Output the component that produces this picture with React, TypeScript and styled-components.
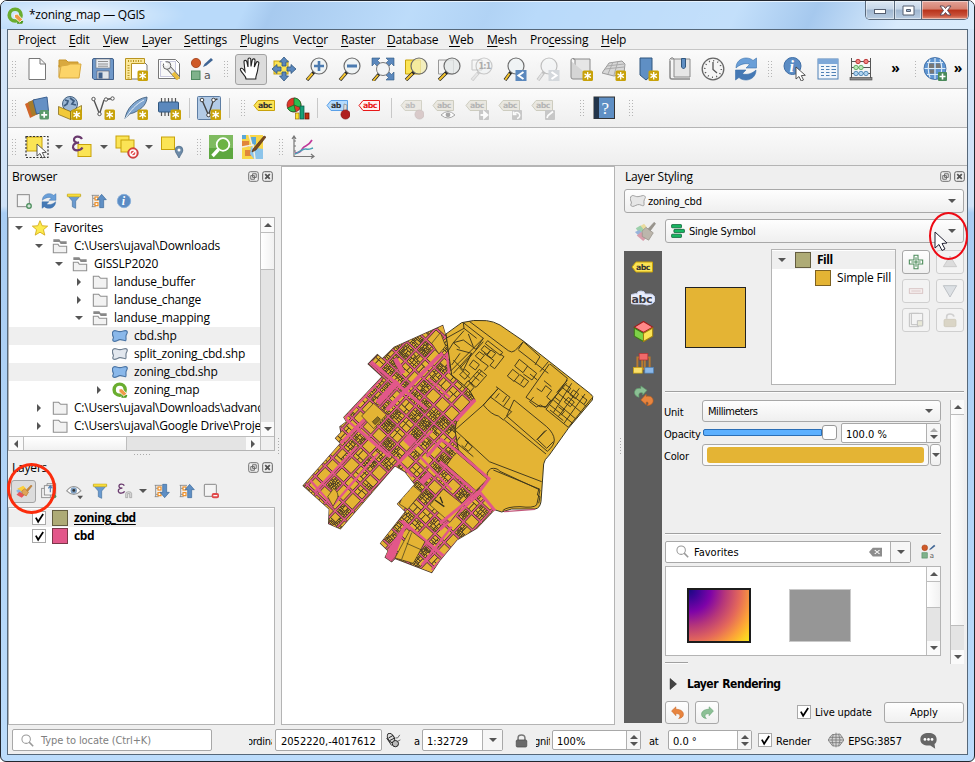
import React from 'react';
import styled, { createGlobalStyle, css } from 'styled-components';

const ui = `"Open Sans", "Noto Sans", sans-serif`;
const tahoma = `"DejaVu Sans Condensed", "DejaVu Sans", sans-serif`;

const Global = createGlobalStyle`
  * { box-sizing: border-box; }
  body { margin: 0; background: #fff; font-family: ${ui}; font-size: 12px; color: #000; overflow: hidden; }
  svg { display: block; flex: none; }
`;

/* ---------- window ---------- */
const Window = styled.div`
  position: relative; width: 975px; height: 762px; display: flex; flex-direction: column;
  border: 1px solid #22262e; border-radius: 7px 7px 6px 6px;
  background: linear-gradient(180deg, #d3e5f8 0, #cfe2f7 205px, #a9cdf3 212px, #b3d6f8 560px, #bcdcfb 100%);
  overflow: hidden;
`;
const TitleBar = styled.div`
  height: 28px; flex: none; display: flex; align-items: flex-start; padding-left: 6px;
  background:
    radial-gradient(ellipse 110px 22px at 75px 14px, rgba(255,255,255,.75), rgba(255,255,255,0)),
    linear-gradient(115deg, rgba(255,255,255,0) 25%, rgba(120,160,210,.28) 28%, rgba(255,255,255,.05) 42%, rgba(120,160,210,.12) 50%, rgba(255,255,255,0) 55%, rgba(255,255,255,.15) 75%, rgba(120,160,210,.3) 83%, rgba(255,255,255,.45) 92%),
    #b9dafa;
  box-shadow: inset 0 1px 0 #e6f2fe;
`;
const TitleIcon = styled.div`padding-top: 6px;`;
const TitleText = styled.div`
  padding: 5px 0 0 5px; font-size: 12px; letter-spacing: -0.25px; line-height: 18px; flex: 1;
`;
const WinButtons = styled.div`
  display: flex; height: 19px; width: 104px; margin-right: 5px; border: 1px solid #5a6a7d; border-top: 0;
  border-radius: 0 0 5px 5px; overflow: hidden;
`;
const WinButton = styled.div<{ $w: number; $close?: boolean }>`
  width: ${p => p.$w}px; display: flex; justify-content: center; align-items: center;
  border-right: ${p => (p.$close ? 0 : 1)}px solid #5a6a7d;
  box-shadow: inset 0 0 0 1px rgba(255,255,255,.45);
  background: ${p => p.$close
    ? 'linear-gradient(#e3a398 0, #d5806f 45%, #b8321a 50%, #c8513a 80%, #e0907a 100%)'
    : 'linear-gradient(#dde8f4 0, #c5d5e7 45%, #a0b6d0 50%, #b9cde2 100%)'};
`;
const Body = styled.div`
  margin: 0 6px 6px; width: 961px; height: 726px; border: 1px solid #56687a; background: #efefef;
  display: flex; flex-direction: column;
`;
const MenuBar = styled.div`
  height: 20px; flex: none; display: flex; padding-left: 10px; background: #f0f0f0; border-bottom: 1px solid #c6c6c6;
`;
const MenuItem = styled.div<{ $w: number; $ls?: number }>`
  width: ${p => p.$w + 14}px; line-height: 20px; white-space: nowrap; font-size: 12px;
  letter-spacing: ${p => p.$ls ?? -0.2}px;
  u { text-underline-offset: 2px; text-decoration-thickness: 1px; }
`;
const ToolBar = styled.div<{ $h: number }>`
  height: ${p => p.$h}px; flex: none; display: flex; align-items: center; background: linear-gradient(#fbfbfb, #eeeeee);
  border-bottom: 1px solid #b4b4b4;
`;
const Cell = styled.div<{ $w: number }>`
  width: ${p => p.$w}px; flex: none; display: flex; align-items: center; justify-content: center;
`;
const Grip = styled.div<{ $w: number }>`
  width: ${p => p.$w}px; height: 18px; flex: none; display: flex; justify-content: center;
  &::before { content: ''; width: 6px; height: 18px;
    background: radial-gradient(circle, #b5b5b5 0.8px, transparent 1px) 0 0 / 3px 3px; }
`;
const Sep = styled.div<{ $w: number }>`
  width: ${p => p.$w}px; flex: none; display: flex; justify-content: center;
  &::before { content: ''; width: 1px; height: 20px; background: #c8c8c8; }
`;
const Pressed = styled.div<{ $w: number; $h: number }>`
  width: ${p => p.$w}px; height: ${p => p.$h}px; border: 1px solid #a3a3a3; border-radius: 3px; background: #dcdcdc;
  display: flex; align-items: center; justify-content: center; flex: none;
`;
const More = styled.div<{ $w: number }>`
  width: ${p => p.$w}px; text-align: center; font: bold 14px/18px ${ui}; padding-bottom: 2px;
`;
const Caret = styled.div<{ $dir?: 'up' | 'down' | 'right' | 'left'; $s?: number; $c?: string }>`
  width: 0; height: 0; flex: none; ${p => {
    const s = p.$s ?? 4, c = p.$c ?? '#555';
    const side = `${s}px solid transparent`, tip = `${s}px solid ${c}`;
    switch (p.$dir) {
      case 'up': return css`border-left: ${side}; border-right: ${side}; border-bottom: ${tip};`;
      case 'right': return css`border-top: ${side}; border-bottom: ${side}; border-left: ${tip};`;
      case 'left': return css`border-top: ${side}; border-bottom: ${side}; border-right: ${tip};`;
      default: return css`border-left: ${side}; border-right: ${side}; border-top: ${tip};`;
    }
  }}
`;

/* ---------- docks ---------- */
const Main = styled.div`height: 559px; display: flex; flex: none;`;
const LeftDock = styled.div`width: 267px; display: flex; flex-direction: column;`;
const DockTitle = styled.div<{ $h: number; $pl: number; $pr: number }>`
  height: ${p => p.$h}px; flex: none; display: flex; align-items: center; padding: 0 ${p => p.$pr}px 1px ${p => p.$pl}px;
  letter-spacing: -0.2px; gap: 3px;
  span { flex: 1; }
`;
const DockTools = styled.div`height: 29px; flex: none; display: flex; align-items: center; padding: 0 0 3px 3px;`;
const TreeBox = styled.div<{ $h: number }>`
  height: ${p => p.$h}px; flex: none; background: #fff; border: 1px solid #b4b4b4; display: flex; flex-direction: column;
`;
const TreeTop = styled.div`display: flex; flex: 1; min-height: 0;`;
const TreeRows = styled.div`flex: 1; min-width: 0; overflow: hidden; padding-top: 1px;`;
const TreeRow = styled.div<{ $lvl: number; $alt?: boolean }>`
  height: 18px; display: flex; align-items: center; padding-left: ${p => p.$lvl * 20}px;
  background: ${p => (p.$alt ? '#efefef' : 'transparent')};
`;
const Label = styled.span<{ $ls?: number; $b?: boolean; $u?: boolean; $pl?: number }>`
  white-space: nowrap; line-height: 18px; letter-spacing: ${p => p.$ls ?? -0.2}px; padding-left: ${p => p.$pl ?? 3}px;
  font-weight: ${p => (p.$b ? 700 : 400)};
  text-decoration: ${p => (p.$u ? 'underline' : 'none')}; text-underline-offset: 2px;
`;
const VBar = styled.div`
  width: 14px; flex: none; display: flex; flex-direction: column; background: #e4e4e4;
  border-left: 1px solid #bdbdbd;
`;
const BarEnd = styled.div<{ $v?: boolean }>`
  ${p => (p.$v ? 'width: 14px;' : 'height: 14px;')} flex: none; background: #fafafa; display: flex; align-items: center; justify-content: center;
`;
const Thumb = styled.div<{ $n: number; $v?: boolean }>`
  ${p => p.$v
    ? `width: ${p.$n}px; background: linear-gradient(#fff, #f1f1f1); border-width: 0 1px;`
    : `height: ${p.$n}px; background: linear-gradient(90deg, #fff, #f1f1f1); border-width: 1px 0;`}
  flex: none; border-style: solid; border-color: #bdbdbd;
`;
const Fill = styled.div`flex: 1;`;
const HBar = styled.div`height: 14px; flex: none; display: flex; background: #e4e4e4; border-top: 1px solid #bdbdbd;`;
const HBarCorner = styled.div`width: 14px; background: #efefef; border-left: 1px solid #bdbdbd;`;
const Splitter = styled.div`
  height: 6px; flex: none; display: flex; justify-content: center; align-items: center;
  &::before { content: ''; width: 18px; height: 2px; background: radial-gradient(circle, #aaa .8px, transparent 1px) 0 0 / 3px 3px; }
`;
const VSplit = styled.div<{ $w: number }>`
  width: ${p => p.$w}px; flex: none; display: flex; flex-direction: column; align-items: center; justify-content: center;
  &::before { content: ''; width: 2px; height: 18px; background: radial-gradient(circle, #aaa .8px, transparent 1px) 0 0 / 3px 3px; }
`;
const Check = styled.div`
  width: 14px; height: 14px; border: 1px solid #a9a9a9; background: #fff; flex: none;
  display: flex; align-items: center; justify-content: center;
`;
const Swatch = styled.div<{ $c: string; $s?: number }>`
  width: ${p => p.$s ?? 16}px; height: ${p => p.$s ?? 16}px; background: ${p => p.$c}; border: 1px solid rgba(40,30,20,.55); flex: none;
`;
const Canvas = styled.div`width: 334px; flex: none; border: 1px solid #b4b4b4; background: #fff;`;

/* ---------- styling panel ---------- */
const RightDock = styled.div`width: 343px; display: flex; flex-direction: column; font-family: ${tahoma}; font-size: 11px;`;
const TitleWrap = styled.div`font-family: ${ui}; font-size: 12px; height: 23px;`;
const Combo = styled.div<{ $w: number; $h: number }>`
  width: ${p => p.$w}px; height: ${p => p.$h}px; flex: none; border: 1px solid #a8a8a8; border-radius: 3px;
  background: linear-gradient(#fefefe, #efefef); display: flex; align-items: center; padding: 0 7px 0 5px;
  > span { flex: 1; padding-top: 2px; }
`;
const RendererRow = styled.div`display: flex; align-items: center; padding-top: 6px; height: 30px;`;
const StyleBody = styled.div`display: flex; gap: 3px; padding-top: 6px; height: 481px;`;
const SideTabs = styled.div`
  width: 38px; margin: 2px 0 1px; background: #5d5d5d; display: flex; flex-direction: column; align-items: center; flex: none;
`;
const SideTab = styled.div`height: 32px; width: 31px; display: flex; align-items: center; justify-content: center;`;
const StyleContent = styled.div`width: 299px; display: flex; flex-direction: column;`;
const SymbolRow = styled.div`display: flex; height: 136px; flex: none;`;
const Preview = styled.div`width: 106px; padding: 38px 0 0 20px;`;
const PreviewFill = styled.div`width: 61px; height: 61px; background: #e4b434; border: 1px solid #222;`;
const SymbolTree = styled.div`width: 125px; border: 1px solid #b4b4b4; background: #fff; font-family: ${ui}; font-size: 12px; padding-top: 1px;`;
const SymbolButtons = styled.div`
  display: grid; grid-template-columns: 28px 28px; grid-auto-rows: 24px; gap: 5px 6px; margin: 1px 0 0 6px;
`;
const PushButton = styled.div<{ $w: number; $h: number; $dim?: boolean; $text?: boolean }>`
  width: ${p => p.$w}px; height: ${p => p.$h}px; border: 1px solid ${p => (p.$dim ? '#cfcfcf' : '#a8a8a8')}; border-radius: 3px;
  background: ${p => (p.$dim ? '#f3f3f3' : 'linear-gradient(#fefefe, #f0f0f0)')};
  display: flex; align-items: center; justify-content: center; flex: none; padding-top: ${p => (p.$text ? 2 : 0)}px;
`;
const Rule = styled.div<{ $mt: number; $w: number }>`
  margin-top: ${p => p.$mt}px; width: ${p => p.$w}px; height: 2px; border-top: 1px solid #a0a0a0; background: #fcfcfc; flex: none;
`;
const ScrollArea = styled.div`display: flex; height: 271px; gap: 9px; padding-top: 7px; flex: none;`;
const Form = styled.div`width: 276px; display: flex; flex-direction: column;`;
const FormRow = styled.div<{ $h: number }>`
  height: ${p => p.$h}px; display: flex; align-items: center; flex: none;
  > label { width: 37px; flex: none; letter-spacing: -0.2px; white-space: nowrap; padding-top: 2px; margin-left: -1px; margin-right: 1px; }
`;
const Slider = styled.div`
  width: 135px; height: 14px; display: flex; align-items: center; flex: none; margin-right: 4px; margin-top: -2px;
  &::before { content: ''; height: 5px; width: 121px; margin-left: 1px; border: 1px solid #2b6eb5; border-radius: 2px 0 0 2px; background: #5cb0ff; }
  &::after { content: ''; width: 13px; height: 13px; border: 1px solid #999; border-radius: 3px; background: #fff; }
`;
const Spin = styled.div<{ $w: number; $h: number }>`
  width: ${p => p.$w}px; height: ${p => p.$h}px; border: 1px solid #a8a8a8; border-radius: 2px; background: #fff; flex: none;
  display: flex; align-items: center; padding-left: 4px; white-space: nowrap; overflow: hidden;
  > span { flex: 1; padding-top: 2px; }
`;
const SpinArrows = styled.div<{ $w?: number }>`
  width: ${p => p.$w ?? 14}px; height: 100%; border-left: 1px solid #b0b0b0; background: #f6f6f6; flex: none;
  display: flex; flex-direction: column; align-items: center; justify-content: center; gap: 3px;
`;
const ColorButton = styled.div`
  width: 227px; height: 22px; border: 1px solid #a8a8a8; border-radius: 3px; background: #fafafa; padding: 2px 4px; flex: none;
  &::before { content: ''; display: block; height: 16px; border-radius: 3px; background: #e4b434; }
`;
const SearchRow = styled.div`display: flex; align-items: center; padding-top: 5px; height: 29px;`;
const StyleList = styled.div`
  margin-top: 3px; height: 90px; border: 1px solid #b4b4b4; background: #fff; display: flex; flex: none;
`;
const StyleItems = styled.div`flex: 1; display: flex; padding: 21px 0 0 21px; gap: 38px;`;
const Gradient = styled.div`
  width: 64px; height: 55px; border: 2px solid #1c1c1c;
  background: radial-gradient(circle at 0 0, #1a0a80 0, #3c0496 8px, #7e03a8 22px, #b5367a 36px, #e4685a 51px, #fb9f3a 63px, #fdca26 72px, #f0f221 82px);
`;
const Gray = styled.div`width: 62px; height: 53px; margin-top: 1px; border: 1px solid #c9c9c9; background: #969696;`;
const RenderingHead = styled.div`
  display: flex; align-items: center; height: 19px; margin-top: 10px; padding: 1px 0 0 4px; gap: 8px; flex: none;
  font: bold 12px ${tahoma}; letter-spacing: -0.5px; word-spacing: 1px;
  svg { margin-right: 1px; }
`;
const ActionRow = styled.div`display: flex; align-items: center; height: 24px; margin-top: 7px; flex: none; line-height: 18px;`;

/* ---------- status bar ---------- */
const Status = styled.div`
  height: 29px; flex: none; display: flex; align-items: center; font-family: ${tahoma}; font-size: 11px; padding: 1px 0 0 4px;
`;
const Field = styled.div<{ $w: number; $ml: number; $pl: number; $c?: string }>`
  width: ${p => p.$w}px; margin-left: ${p => p.$ml}px; height: 22px; flex: none; border: 1px solid #a8a8a8; border-radius: 2px; background: #fff;
  display: flex; align-items: center; padding-left: ${p => p.$pl}px; color: ${p => p.$c ?? '#000'}; white-space: nowrap;
  > span { flex: 1; padding-top: 2px; }
`;
const Clip = styled.div<{ $w: number; $ml: number; $shift?: number }>`
  width: ${p => p.$w}px; margin-left: ${p => p.$ml}px; overflow: hidden; white-space: nowrap; flex: none; padding-top: 2px;
  span { margin-left: ${p => -(p.$shift ?? 0)}px; letter-spacing: -0.3px; }
`;
const Push = styled.div<{ $ml: number }>`margin-left: ${p => p.$ml}px; flex: none; white-space: nowrap;`;
const StatusText = styled.div<{ $ls: number }>`padding: 2px 0 0 4px; letter-spacing: ${p => p.$ls}px; white-space: nowrap;`;

/* ---------- annotations over the window ---------- */
const Ring = styled.div<{ $x: number; $y: number; $w: number; $h: number; $b: number; $c: string }>`
  position: absolute; left: ${p => p.$x}px; top: ${p => p.$y}px; width: ${p => p.$w}px; height: ${p => p.$h}px;
  border: ${p => p.$b}px solid ${p => p.$c}; border-radius: 50%;
`;
const Pointer = styled.div`position: absolute; left: 933px; top: 230px;`;

/* ---------- icons ---------- */
const GoldBadge = () => (
  <g>
    <rect x="13.500" y="13.500" width="10.500" height="10.500" rx="1.5" fill="#c8a20a" />
    <path d="M18.700 15v7.400M15.500 16.900l6.400 3.700M21.900 16.900l-6.400 3.700" stroke="#fff" strokeWidth="1.3" />
  </g>
);
const Tag = ({ fill, stroke, ink, text = 'abc' }: { fill: string; stroke: string; ink: string; text?: string }) => (
  <g>
    <path d="M1 9.500l4-5h16.500v10H5z" fill={fill} stroke={stroke} strokeWidth="1" />
    <text x="5" y="12.300" fontFamily="DejaVu Sans" fontWeight="700" fontSize="7.8" letterSpacing="-.5" fill={ink}>{text}</text>
  </g>
);
const Lens = ({ cx = 14, cy = 9, fill = '#eef2f4', dim }: { cx?: number; cy?: number; fill?: string; dim?: boolean }) => (
  <g opacity={dim ? 0.4 : 1}>
    <path d={`M${cx - 5} ${cy + 6}L2 23`} stroke={dim ? '#777' : '#222'} strokeWidth="3.4" />
    <path d={`M${cx - 6.5} ${cy + 7.5}L2.3 22.7`} stroke={dim ? '#ccc' : '#f4c430'} strokeWidth="2" />
    <circle cx={cx} cy={cy} r="8" fill={fill} fillOpacity=".8" stroke="#6d6d6d" strokeWidth="1.2" />
  </g>
);
const Qlogo = () => (
  <g>
    <circle cx="11.500" cy="11.500" r="8.300" fill="none" stroke="#6aad2f" strokeWidth="5.200" />
    <path d="M16 17l7 3-1.500 3.500H14z" fill="#4e9a1e" />
    <path d="M10.500 10.500l4.500-.5 7 7.500-4 4-7.500-7z" fill="#f09a48" stroke="#fff" strokeWidth="1.200" />
  </g>
);
const Refresh = () => (
  <g>
    <path d="M2 11C2 4.500 7 1 12 1c3 0 5.500 1 7 2.500L22.500 1v10H12l3.500-3.500C14 6 7 6 2 11z" fill="#6a9fd8" stroke="#3a70ab" strokeWidth=".6" />
    <path d="M22 13c0 6.500-5 10-10 10-3 0-5.500-1-7-2.500L1.500 23V13H12l-3.500 3.500C10 18 17 18 22 13z" fill="#4579b5" stroke="#3a70ab" strokeWidth=".6" />
  </g>
);
const Cursor = ({ x = 0, y = 0 }: { x?: number; y?: number }) => (
  <path transform={`translate(${x} ${y})`} d="M0 0v12l3-2.500 2.200 4.500 2.300-1.100-2.200-4.300 4-.3z" fill="#fff" stroke="#444" strokeWidth=".9" />
);
const PaletteDim = () => (
  <g opacity=".85">
    <path d="M6 7l5-3 3 4-6 4z" fill="#e8d890" />
    <path d="M2 9l5-3 4 5-5 4z" fill="#8fcaa0" />
    <path d="M1 13l5-2 5 5-4 3z" fill="#88a8d8" />
    <path d="M3 17l5-4 7 5-5 5z" fill="#d490a0" />
    <path d="M9 12l4-4 8 6-5 8-7-4z" fill="#b3aca0" stroke="#857f76" strokeWidth=".8" />
    <path d="M15.500 9.500l6.500-7 1.500 1.500-5.500 7.500z" fill="#8a857c" stroke="#77726a" strokeWidth=".6" />
  </g>
);
const Brush = () => (
  <g>
    <path d="M3 9l8-4 4 4-8 5z" fill="#fbcf3c" />
    <path d="M1.500 11.500l3.500-2 5 4.500-4 3z" fill="#8db4e2" />
    <path d="M2 17l4-4 7 4-4 4z" fill="#e8545a" />
    <path d="M9 12l4-3 5 4.500-3 5-5-2.500z" fill="#e0a458" stroke="#b8762c" strokeWidth=".8" />
    <path d="M15 10.500l6.500-6.500 1.300 1.300-5.800 7.200z" fill="#c8883c" stroke="#a86a24" strokeWidth=".6" />
  </g>
);
const StyleMgr = () => (
  <g>
    <circle cx="6" cy="6" r="4.600" fill="#cf5a28" stroke="#a03c14" strokeWidth=".8" />
    <rect x="1.500" y="14" width="8.500" height="8.500" fill="#7fb28b" stroke="#4f8a60" strokeWidth="1" />
    <path d="M13 10l1.500-3L21 1l2 2-6.500 5.500z" fill="#3f6594" />
    <text x="14" y="22" fontFamily="DejaVu Sans" fontSize="11" fill="#555">a</text>
  </g>
);
const Up = () => <path d="M16 2l7 8h-4v12h-6V10H9z" fill="#5f8fc4" stroke="#2f5f94" strokeWidth=".9" />;
const Down = () => <path d="M16 22l7-8h-4V2h-6v12H9z" fill="#5f8fc4" stroke="#2f5f94" strokeWidth=".9" />;
const TreeBits = () => (
  <g>
    <path d="M2.500 3v18M3 8h4M3 17h4M1 3.500h11M1 20.500h6" stroke="#888" strokeWidth="1.300" fill="none" />
    <rect x="6" y="6" width="4.500" height="4.500" fill="#fff" stroke="#ef8b1c" strokeWidth="1.700" />
    <rect x="6" y="14.500" width="4.500" height="4.500" fill="#fff" stroke="#ef8b1c" strokeWidth="1.700" />
  </g>
);
const UndoShape = ({ c = '#e8853f', s = '#c45f1c' }: { c?: string; s?: string }) => (
  <path d="M1 9l8-7.500V6c9 0 14 4 14 9.500 0 4.500-4 7-9 7.500 4-2.500 4-9-5-9v4z" fill={c} stroke={s} strokeWidth=".9" />
);
const polyPath = 'M1 6c3-5 6 0 11-.5s8-3 10-1 1 2.500-.5 5.500.5 8-1 9-5.500-2.500-9-1.500-7 4-9.500 2 1-4 0-6-2-4-1-7.500z';

const icons: Record<string, React.ReactNode> = {
  q: <Qlogo />,
  new: <path d="M4 1.500h11l5.500 5.500v15.500H4zM15 1.500V7h5.500" fill="#fff" stroke="#777" />,
  open: <g><path d="M1 3h7l2 2h10v5H1zM1 8v12" fill="#d9a93e" stroke="#c8962a" /><path d="M1 21L3 9l7-1 2-1h11l-2 14z" fill="#fcd468" stroke="#d9a93e" /></g>,
  save: <g><path d="M1.500 3a1.500 1.500 0 0 1 1.500-1.500h18a1.500 1.500 0 0 1 1.500 1.500v19.500H3L1.500 21z" fill="#6f98c9" stroke="#41618c" /><rect x="5" y="2" width="14" height="9" fill="#e9edf2" stroke="#777" strokeWidth=".6" /><path d="M7 4.500h10M7 7h10M7 9.200h10" stroke="#777" strokeWidth=".8" /><rect x="6" y="14" width="12" height="8" fill="#dfe4ea" stroke="#556" strokeWidth=".6" /><rect x="7.500" y="15.500" width="4" height="6" fill="#41618c" /></g>,
  layout: <g><path d="M5 4h14l4 4v14H5z" fill="#fff" stroke="#777" /><path d="M1.500 1.500h19v5h-13v16h-6z" fill="#fbe89a" stroke="#b89420" /><path d="M4 4h14M4.500 8v14" stroke="#b89420" strokeDasharray="1 1.500" strokeWidth="2" /><rect x="8" y="8" width="11" height="12" fill="#fff" /><GoldBadge /></g>,
  layouts: <g><path d="M1.500 2.500h17l4 4v15h-21z" fill="#fff" stroke="#777" /><rect x="3.500" y="4.500" width="15" height="15" fill="#f8f8f8" stroke="#aac" strokeWidth=".6" /><path d="M10 9l11 12" stroke="#555" strokeWidth="5" /><path d="M10 9l11 12" stroke="#e8e8e8" strokeWidth="3.400" /><path d="M16 16l5.500 6" stroke="#e9bd3a" strokeWidth="4" /><circle cx="10" cy="8.500" r="3.800" fill="#eee" stroke="#666" /><path d="M6 4l4 4.500" stroke="#fff" strokeWidth="2.600" /></g>,
  style: <StyleMgr />,
  hand: <path d="M7 22c0-3-4.500-6-5.500-9-.5-2 1.500-2.500 3-.5l1.500 2L5 5c-.2-2 2.300-2.300 2.800-.3L9 10 9 2.500c0-2 2.700-2 2.800 0L12 9.500l1.300-6.500c.5-1.800 2.900-1.300 2.700.5L15.300 10l2-4.500c.8-1.600 2.900-.8 2.500.9-1 4-.8 6.600-1.800 9.600-.6 2-1.200 3-1.200 6z" fill="#fff" stroke="#222" strokeWidth="1.100" />,
  pan: <g><rect x="2" y="4" width="14" height="13" fill="#fbe455" stroke="#c8a20a" /><path d="M12 0l4.500 5H14v4h-4V5H7.500zM12 24l4.500-5H14v-4h-4v4H7.500zM0 12l5-4.500V10h4v4H5v2.500zM24 12l-5-4.500V10h-4v4h4v2.500z" fill="#5b88bd" stroke="#31577f" strokeWidth=".8" /></g>,
  zin: <g><Lens /><path d="M14 4v10M9 9h10" stroke="#4a7ab0" strokeWidth="2.600" /></g>,
  zout: <g><Lens /><path d="M9 9h10" stroke="#4a7ab0" strokeWidth="2.800" /></g>,
  zfull: <g><path d="M1 1h8L6.500 3.500 10 7 7 10 3.500 6.500 1 9zM23 1v8l-2.500-2.500L17 10l-3-3 3.500-3.500L15 1zM23 23h-8l2.500-2.500L13 16l3-3 4.500 4.500L23 15z" fill="#5b88bd" stroke="#31577f" strokeWidth=".6" /><g transform="translate(1 2)"><path d="M7 15L1 22" stroke="#222" strokeWidth="3.200" /><path d="M6 16L1.300 21.700" stroke="#f4c430" strokeWidth="1.800" /><circle cx="11" cy="10" r="6.500" fill="#f2f4f5" stroke="#777" /></g></g>,
  zsel: <g><path d="M1.500 3h15v14h-15z" fill="#fbe455" stroke="#c8a20a" /><Lens cx={15} fill="#f3ecb0" /></g>,
  zlay: <g><path d="M1.500 3h15v14h-15z" fill="#f3f3f3" stroke="#999" /><Lens cx={15} fill="#e4e7e7" /></g>,
  z11: <g opacity=".8"><path d="M2 3h10v10H2z" fill="none" stroke="#bbb" /><Lens dim /><text x="8.500" y="12" fontSize="8" fontWeight="700" fontFamily="DejaVu Sans" letterSpacing="-.8" fill="#999">1:1</text></g>,
  zprev: <g><Lens cx={13} /><rect x="12.500" y="13" width="11" height="11" fill="#5b88bd" /><path d="M20.500 15l-5 3.500 5 3.500" stroke="#fff" strokeWidth="2" fill="none" /></g>,
  znext: <g><Lens cx={13} dim /><rect x="12.500" y="13" width="11" height="11" fill="#d4d8dc" /><path d="M15.500 15l5 3.500-5 3.500" stroke="#fff" strokeWidth="2" fill="none" /></g>,
  bmark: <g><path d="M2 4a2 2 0 0 1 4-1v17h15V2H4" fill="#e6e6e6" stroke="#8a8a8a" /><path d="M2 4v16a2 2 0 0 0 2 2h17v-2" fill="#d5d5d5" stroke="#8a8a8a" /><GoldBadge /></g>,
  mesh3d: <g><path d="M0 16L7 6l13-2 3 3-1 9-10 3z" fill="#d7d7d7" stroke="#999" /><path d="M3 12l19-2M5 9l17-2M11 5L6 17M16 4l-4 14" stroke="#aaa" fill="none" /><GoldBadge /></g>,
  bnew: <g><path d="M5 1h12v17l-6 5-6-5z" fill="#5f8fc4" stroke="#31577f" /><GoldBadge /></g>,
  bshow: <g><path d="M2 4a2 2 0 0 1 4-2v18h16V2H3" fill="#e6e6e6" stroke="#8a8a8a" /><path d="M2 4v16a2 2 0 0 0 2 2h18" fill="none" stroke="#8a8a8a" strokeWidth="1.500" /><path d="M13.500 1.500h4V10l-2 2-2-2z" fill="#5f8fc4" stroke="#31577f" /></g>,
  clock: <g><circle cx="12" cy="12" r="10.800" fill="#f5f5f5" stroke="#666" strokeWidth="1.300" /><circle cx="12" cy="12" r="8.300" fill="none" stroke="#555" strokeWidth="1.600" strokeDasharray="1 3.340" /><path d="M12 5v7.500l4 3.500" fill="none" stroke="#555" strokeWidth="1.300" /></g>,
  refresh: <Refresh />,
  info: <g><circle cx="9.500" cy="9" r="8.500" fill="#5b8cc4" stroke="#3f6ea6" /><text x="6.500" y="14.500" fontFamily="Liberation Serif" fontStyle="italic" fontWeight="700" fontSize="16" fill="#fff">i</text><Cursor x={13} y={10} /></g>,
  table: <g><rect x="2" y="2" width="20" height="20" fill="#f2f6fb" stroke="#4f80b5" /><rect x="2" y="2" width="20" height="5" fill="#7ea8d8" /><path d="M5 9.500h3M5 12.500h3M5 15.500h3M5 18.500h3M10 9.500h3.500M10 12.500h3.500M10 15.500h3.500M10 18.500h3.500M15.500 9.500H20M15.500 12.500H20M15.500 15.500H20M15.500 18.500H20" stroke="#4f80b5" /></g>,
  abacus: <g><path d="M2.500 1v20M21.500 1v20M2 4.500h20M2 10.500h20M2 16.500h20" stroke="#555" /><rect x="1" y="20.500" width="22" height="2.500" fill="#888" stroke="#444" strokeWidth=".6" /><g strokeWidth=".8"><circle cx="9" cy="4.500" r="2.200" fill="#f08080" stroke="#b02020" /><circle cx="17" cy="4.500" r="2.200" fill="#f08080" stroke="#b02020" /><circle cx="7" cy="10.500" r="2.200" fill="#b8e8b8" stroke="#50a050" /><circle cx="12" cy="10.500" r="2.200" fill="#b8e8b8" stroke="#50a050" /><circle cx="7" cy="16.500" r="2.200" fill="#b0d4f0" stroke="#3f7cae" /><circle cx="12" cy="16.500" r="2.200" fill="#b0d4f0" stroke="#3f7cae" /><circle cx="17" cy="16.500" r="2.200" fill="#b0d4f0" stroke="#3f7cae" /></g></g>,
  globe: <g><circle cx="12" cy="11.500" r="11" fill="#5e95d2" stroke="#35639a" strokeWidth=".8" /><path d="M4 5.500h16M1.500 11.500h21M4 17.500h16M12 1v21M7 2.500Q3.500 11.500 7 20.500M17 2.500Q20.500 11.500 17 20.500" stroke="#dcebf8" fill="none" strokeWidth="1.200" /><path d="M6 6.500h5V11H6zM13 6.500h4l1 4.500h-5zM7 12.500h4v4H7z" fill="#777" /><rect x="15" y="15" width="9" height="9" rx="1" fill="#4a8a5a" /><path d="M19.500 16.500v6M16.500 19.500h6" stroke="#fff" strokeWidth="1.600" /></g>,
  dsm: <g><path d="M0 8l10-5 5 14-10 5z" fill="#d0662a" /><path d="M3 6l9-3 4 14-9 3z" fill="#a67c2a" /><path d="M8 4l14-3 1.500 14-12 3z" fill="#6590c4" stroke="#3c6191" /><rect x="14.500" y="14" width="9.500" height="9.500" rx="1.500" fill="#5a9a6a" /><path d="M19.200 15.800v6M16.200 18.800h6" stroke="#fff" strokeWidth="1.700" /></g>,
  gpkg: <g><circle cx="12" cy="8" r="7.500" fill="#9db8d6" stroke="#44617f" /><path d="M7 4l3 1-1 3-3 2M12 2l4 3-2 3 4 1" fill="none" stroke="#3d5c80" strokeWidth="1.800" /><path d="M0.500 10.500l12 5v8l-12-5z" fill="#f2c93a" stroke="#7a6010" strokeWidth=".7" /><path d="M12.500 15.500l11-6v9l-11 5z" fill="#fbe455" stroke="#7a6010" strokeWidth=".7" /><GoldBadge /></g>,
  shp: <g><path d="M2.500 3l6 15L13 4M15 3.500l6-1" stroke="#555" strokeWidth="1.400" fill="none" /><circle cx="2.500" cy="3" r="1.700" fill="#fff" stroke="#555" /><circle cx="8.500" cy="18" r="1.700" fill="#fff" stroke="#555" /><circle cx="15" cy="3.500" r="1.700" fill="#fff" stroke="#555" /><circle cx="21.500" cy="2.500" r="1.700" fill="#fff" stroke="#555" /><GoldBadge /></g>,
  feather: <g><path d="M1 23C2 14 10 3 23 1c0 6-4 12-14 16-3 .5-4 1-8 6z" fill="#7fa5cf" stroke="#44617f" strokeWidth=".9" /><path d="M1 23C6 15 12 8 20 4" stroke="#e4eef8" fill="none" /><GoldBadge /></g>,
  chip: <g><path d="M4.500 2v18M8 2v18M11.500 2v18M15 2v18M18.500 2v18" stroke="#555" strokeWidth="1.200" /><rect x="1.500" y="6" width="20" height="10" rx="1" fill="#5b88bd" stroke="#31577f" /><GoldBadge /></g>,
  virt: <g><rect x=".5" y=".5" width="23" height="23" rx="1" fill="#b3cbe6" stroke="#5d7da3" /><path d="M5 4l6.500 15L16.500 4l4-1" stroke="#444" strokeWidth="1.400" fill="none" /><circle cx="5" cy="4" r="1.800" fill="#fff" stroke="#444" /><circle cx="11.500" cy="19" r="1.800" fill="#fff" stroke="#444" /><circle cx="16.500" cy="4" r="1.800" fill="#fff" stroke="#444" /><GoldBadge /></g>,
  tagY: <Tag fill="#fbe455" stroke="#c8a20a" ink="#333" />,
  tagTab: <g transform="translate(0 2.500)"><Tag fill="#fbe455" stroke="#c8a20a" ink="#333" /></g>,
  chart: <g><circle cx="8" cy="9" r="7" fill="#e03828" stroke="#801010" strokeWidth=".7" /><path d="M8 9V2a7 7 0 0 1 6.500 9.500zM8 9l-6.500 3a7 7 0 0 0 8 3.500z" fill="#2ebc50" stroke="#106020" strokeWidth=".7" /><rect x="9.500" y="17" width="3.500" height="6" fill="#fbe030" stroke="#a07000" strokeWidth=".7" /><rect x="14" y="10" width="4" height="13" fill="#18a078" stroke="#085040" strokeWidth=".7" /><rect x="19" y="17" width="4" height="6" fill="#c03010" stroke="#601000" strokeWidth=".7" /></g>,
  tagPin: <g><Tag fill="#b5dafc" stroke="#5aa0e8" ink="#333" text="ab" /><path d="M18 8l3 1-.5 7h-3z" fill="#ddd" stroke="#777" strokeWidth=".6" /><circle cx="19.500" cy="18.500" r="4.600" fill="#b02020" stroke="#7a1010" strokeWidth=".6" /></g>,
  tagRed: <Tag fill="#fff2f2" stroke="#e81818" ink="#e81818" />,
  tg1: <g opacity=".6"><Tag fill="#e4e2d8" stroke="#bdbba8" ink="#999" text="ab" /><circle cx="19.500" cy="18.500" r="4.600" fill="#c8b0b0" stroke="#a99" strokeWidth=".6" /></g>,
  tg2: <g opacity=".7"><Tag fill="#e4e2d8" stroke="#bdbba8" ink="#999" /><path d="M9 19q7-7 14 0q-7 6-14 0z" fill="#fff" stroke="#888" /><circle cx="16" cy="18.800" r="2.400" fill="#888" /></g>,
  tg3: <g opacity=".7"><Tag fill="#e4e2d8" stroke="#bdbba8" ink="#999" /><rect x="14" y="14" width="10" height="10" rx="1" fill="#b5b5b5" /><path d="M15.500 19H20M19 16l3.500 3-3.500 3z" stroke="#fff" strokeWidth="1.800" fill="#fff" /></g>,
  tg4: <g opacity=".7"><Tag fill="#e4e2d8" stroke="#bdbba8" ink="#999" /><rect x="14" y="14" width="10" height="10" rx="1" fill="#b5b5b5" /><path d="M16.500 17.500a3 3 0 1 1 2.500 5M15.500 15.500v3h3" stroke="#fff" strokeWidth="1.500" fill="none" /></g>,
  tg5: <g opacity=".7"><Tag fill="#e4e2d8" stroke="#bdbba8" ink="#999" /><rect x="14" y="14" width="10" height="10" rx="1" fill="#b5b5b5" /><path d="M16 22l1-2.500 5-4" stroke="#fff" strokeWidth="1.800" fill="none" /></g>,
  help: <g><rect x="2" y="1" width="20.500" height="21.500" fill="#5f8fc4" stroke="#333" /><rect x="2" y="1" width="5" height="21.500" fill="#22344a" /><text x="9.500" y="18" fontFamily="Liberation Serif" fontSize="17" fill="#fff">?</text></g>,
  sel: <g><rect x="2" y="2" width="15" height="14" fill="#fbe455" stroke="#c8a20a" /><rect x="1" y="1.500" width="22" height="21" fill="none" stroke="#333" strokeWidth="1.200" strokeDasharray="2 1.500" /><Cursor x={12} y={9} /></g>,
  eps: <g><rect x="8" y="9.500" width="13" height="12" fill="#fbe455" stroke="#c8a20a" /><path d="M12 4C10 .5 3.500 1 4 5c.3 2.500 3 3 5 2.600C5 7.600 2.500 10 3 12.500c.8 4 7.500 3.500 9.500 0" fill="none" stroke="#6a3a6e" strokeWidth="2.200" /></g>,
  desel: <g><rect x="1" y="1" width="13" height="12" fill="#fbe455" stroke="#c8a20a" /><rect x="6" y="5" width="13" height="12" fill="#fbe455" stroke="#c8a20a" /><circle cx="18" cy="18" r="5.300" fill="#e0484a" stroke="#b02020" strokeWidth=".6" /><circle cx="18" cy="18" r="3" fill="none" stroke="#fff" strokeWidth="1.300" /><path d="M16 20l4-4" stroke="#fff" strokeWidth="1.300" /></g>,
  selLoc: <g><rect x="1.500" y="2" width="13" height="12.500" fill="#fbe455" stroke="#c8a20a" /><path d="M19 23c-2-4-3.800-5.500-3.800-8a3.800 3.800 0 0 1 7.600 0c0 2.500-1.800 4-3.800 8z" fill="#6d8ba8" stroke="#4a6885" strokeWidth=".8" /><circle cx="19" cy="15" r="1.500" fill="#fff" /></g>,
  qms: <g><rect x="0" y="0" width="24" height="24" fill="#7fbb60" /><rect x="0" y="13" width="24" height="11" fill="#4f9e33" opacity=".7" /><circle cx="14" cy="9.500" r="6.300" fill="#6cb344" stroke="#fff" strokeWidth="1.800" /><path d="M9.500 14.500L3.500 21" stroke="#fff" strokeWidth="3.400" /></g>,
  osm: <g><rect x="0" y="0" width="21" height="24" fill="#f8d648" /><path d="M0 6h7v6H0zM3 15h6v6H3z" fill="#e0853a" /><path d="M9 12l12 2v10h-9l-4-5z" fill="#8cc4ea" /><path d="M9 2h5v7l-4 3zM0 0h4v4H0z" fill="#5aa8d8" /><path d="M0 12l11-2 2 14M7 0l3 10" stroke="#f4efe0" strokeWidth="1.500" fill="none" /><path d="M11 14L22 1l2 1-10 13-4 2z" fill="#7a4a20" stroke="#4a2a10" strokeWidth=".6" /></g>,
  prof: <g><path d="M3 2v19.500h19M1 4l2-3 2 3M20 19l3 2.500-3 2M3 6h2M3 11h2M3 16h2" stroke="#777" fill="none" strokeWidth="1.200" /><path d="M4 18c5 0 6-2 8-5s5-1 9-8" stroke="#c03a9a" strokeWidth="1.700" fill="none" /><path d="M4 19c5-2 8-6 11-5s4 0 7-1" stroke="#4aa0b4" strokeWidth="1.500" fill="none" /></g>,
  addl: <g><rect x="2" y="2.500" width="18" height="18" fill="#f4f4f4" stroke="#8a8a8a" strokeWidth="1.500" /><circle cx="19.500" cy="19.500" r="4.400" fill="#4f9160" /><path d="M19.500 17v5M17 19.500h5" stroke="#fff" strokeWidth="1.500" /></g>,
  filter: <g><path d="M1.500 3h21l-8 9v11l-5-2.500V12z" fill="#6a9ad0" stroke="#44719f" /><path d="M2 1.500h20v4H2z" fill="#f6dc3c" stroke="#c8a20a" strokeWidth=".7" /></g>,
  collapse: <g><TreeBits /><Up /></g>,
  expand: <g><TreeBits /><Down /></g>,
  infoB: <g><circle cx="12" cy="12" r="10" fill="#5b8cc4" stroke="#8ab0da" strokeWidth="1.500" /><text x="8.500" y="18" fontFamily="Liberation Serif" fontStyle="italic" fontWeight="700" fontSize="18" fill="#fff">i</text></g>,
  star: <path d="M12 1l3.200 7.600 8.300.6-6.300 5.300 2 8.200L12 18.300l-7.200 4.400 2-8.200L.5 9.200l8.300-.6z" fill="#fceb4f" stroke="#d0a410" strokeWidth="1.200" />,
  folderO: <g><path d="M2 2h9l2 3h9v4h-9l-2-3H2z" fill="#888" /><path d="M2 9.500h7l2 3h11v9.500H2z" fill="#f2f2f2" stroke="#8f8f8f" strokeWidth="1.600" /></g>,
  folder: <path d="M2 3.500h8l3 3h9.500v15H2z" fill="#f2f2f2" stroke="#8f8f8f" strokeWidth="1.600" />,
  poly: <path d={polyPath} fill="#8ab8ea" stroke="#4a74a4" strokeWidth="1.700" />,
  polyG: <path d={polyPath} fill="#e2e7ee" stroke="#6f7f90" strokeWidth="1.700" />,
  polyL: <path d={polyPath} fill="#e6e6e6" stroke="#a0a0a0" strokeWidth="1.500" />,
  brush: <Brush />,
  brushDim: <PaletteDim />,
  group: <g><path d="M9 5V1h13v16h-5" fill="#eee" stroke="#888" strokeWidth="1.300" /><rect x="1" y="8" width="13" height="14" fill="#f4f4f4" stroke="#888" strokeWidth="1.300" /><rect x="5" y="4" width="13" height="14" fill="#f4f4f4" stroke="#888" strokeWidth="1.300" /><path d="M14 4v10M11 8l3-4 3 4" stroke="#4f80b5" strokeWidth="1.800" fill="none" /><circle cx="20" cy="20" r="3" fill="#4f9160" /></g>,
  eye: <g><path d="M1 11q10-12 20 0q-10 10-20 0z" fill="#fff" stroke="#999" strokeWidth="1.600" /><circle cx="11" cy="10.500" r="4.500" fill="#7f9fc0" /><circle cx="11" cy="10.500" r="2" fill="#333" /><path d="M16 18h8l-4 5z" fill="#555" /></g>,
  epsF: <g><path d="M11 4C9 .5 2.500 1 3 5c.3 2.500 3 3 5 2.600C4 7.600 1.500 10 2 12.500c.8 4 7.500 3.500 9.500 0" fill="none" stroke="#6a3a6e" strokeWidth="2" /><path d="M13 22v-6q0-3 4.500-3t4.500 3v6h-3v-6h-3v6z" fill="#d8d8d8" stroke="#888" strokeWidth=".8" /></g>,
  remove: <g><rect x="2" y="2" width="18" height="18" rx="1" fill="#f4f4f4" stroke="#8a8a8a" strokeWidth="1.500" /><rect x="13" y="15" width="11" height="8" rx="3" fill="#e0484a" /><path d="M15.500 19h6" stroke="#fff" strokeWidth="1.800" /></g>,
  single: <g fill="#18b862" stroke="#0a5c34" strokeWidth="1.300"><rect x="1" y="1" width="17" height="5.500" rx="1" /><rect x="5" y="9.200" width="18" height="5.500" rx="1" /><rect x="1" y="17.500" width="17" height="5.500" rx="1" /></g>,
  abcW: <g><path d="M3 17a5 5 0 0 1 0-10q2-1 3 0 0-3 4-3t4 3h4a5 5 0 0 1 2 10q-4 2-8 0z" fill="#e8ecfa" stroke="#c8d0ec" /><text x=".5" y="15.500" fontFamily="DejaVu Sans" fontWeight="700" fontSize="11" letterSpacing="-.4" fill="#3c3c44">abc</text></g>,
  cube: <g strokeWidth="1.200"><path d="M12 .5l10.500 6.500L12 13 1.500 7z" fill="#f88" stroke="#a01818" /><path d="M1.500 8L12 14v9.500L1.500 17.500z" fill="#7ed348" stroke="#3f7a18" /><path d="M22.500 8L12 14v9.500l10.500-6z" fill="#fbe455" stroke="#a08010" /></g>,
  diag: <g><path d="M5 18V5h4M19 18V5h-4M10.500 8v10h3V8" stroke="#b87a30" strokeWidth="2.200" fill="none" /><rect x="7" y=".5" width="10" height="7.500" fill="#f06a6a" stroke="#b03030" strokeWidth=".8" /><rect x="0.500" y="16.500" width="10" height="6.500" fill="#fbe06a" stroke="#c8a20a" strokeWidth=".8" /><rect x="13.500" y="16.500" width="10" height="6.500" fill="#8ab8ea" stroke="#4f80b5" strokeWidth=".8" /></g>,
  hist: <g><path d="M9 1l7 5-5 5.500V9c-4-1-5 1-4 5-4-1-6-4-5-7 1-3 4-3.500 7-3z" fill="#8cc095" stroke="#5a9a68" strokeWidth=".7" /><path d="M9 17l6-6.500V13c5-1 8 1 8 5 0 3.500-3 5.500-7 5.500 2-2 2-4.500-1-4v3z" fill="#e8853f" stroke="#c45f1c" strokeWidth=".7" /></g>,
  plus: <path d="M9 2h6v7h7v6h-7v7H9v-7H2V9h7zM12 5v14M5 12h14" fill="#fff" stroke="#4a8a58" strokeWidth="1.600" />,
  minus: <g><rect x="2" y="8.500" width="20" height="7" fill="#f5eeee" stroke="#d8c4c4" strokeWidth="1.400" /><path d="M5 12h14" stroke="#d8c4c4" strokeWidth="1.400" /></g>,
  triU: <path d="M12 3l10 16H2z" fill="#dcdcdc" stroke="#c4c4c4" strokeWidth="1.200" />,
  triD: <path d="M12 21L2 4h20z" fill="#dce0e4" stroke="#b4b8bc" strokeWidth="1.200" />,
  dup: <g stroke="#c0c0c0" strokeWidth="1.500" fill="#f4f4f4"><path d="M2 2h14v20H2z" /><path d="M5 2h17v17H5z" /><path d="M14 13h8v8h-8z" fill="#e8e8d8" /></g>,
  lockD: <g><path d="M7 10V7q0-4 5-4 5 0 6 4" fill="none" stroke="#d0d0d0" strokeWidth="2.400" /><rect x="3" y="11" width="18" height="11" rx="2" fill="#dad5c6" stroke="#cac5b6" /></g>,
  undo: <UndoShape />,
  redo: <g transform="translate(24 0) scale(-1 1)"><UndoShape c="#8cc095" s="#5a9a68" /></g>,
  search: <g fill="none" stroke="#999"><circle cx="9.500" cy="9.500" r="7.800" strokeWidth="1.900" /><path d="M15 15l7.500 7.500" strokeWidth="2.800" /></g>,
  clear: <g><path d="M0 12l7-10.500h17v21H7z" fill="#8d8d8d" /><path d="M10.500 7l9 10M19.500 7l-9 10" stroke="#fff" strokeWidth="2" /></g>,
  mouse: <g><path d="M3 3l9 15M7 1l9 14M1 8l8 12" stroke="#333" strokeWidth="1.600" /><ellipse cx="8" cy="8" rx="5" ry="8" transform="rotate(-30 8 8)" fill="#ddd" stroke="#222" strokeWidth="1.600" /><path d="M4 8l7-4M6 12l8-4" stroke="#222" strokeWidth="1.600" /><circle cx="15" cy="17" r="5" fill="#bbb" stroke="#222" strokeWidth="1.600" /><path d="M15 8q4 2 7-5M19 13l4-2" stroke="#555" strokeWidth="1.400" fill="none" /></g>,
  lock: <g><path d="M6.500 12V8q0-5 5.500-5t5.500 5v4" fill="none" stroke="#777" strokeWidth="2.400" /><rect x="3.500" y="11" width="17" height="11.500" rx="2" fill="#6a6a6a" stroke="#444" /></g>,
  wire: <g fill="none" stroke="#777" strokeWidth="1.200"><path d="M0 12L6 4l12-1 6 9-7 9H7z" fill="#d4d4d4" /><path d="M12 1v22M2 8h20M0 12h24M3 16h18M8 3Q4 12 8 21M16 3q4 9 0 18" /></g>,
  bubble: <g><path d="M12 1.500c6 0 11.500 2.500 11.500 9 0 3-1 5-3 6.500l1 6.500-7-4.500C7 20 .5 17 .5 10.500.5 4 6 1.500 12 1.500z" fill="#666" /><circle cx="7" cy="10.500" r="1.900" fill="#fff" /><circle cx="12" cy="10.500" r="1.900" fill="#fff" /><circle cx="17" cy="10.500" r="1.900" fill="#fff" /></g>,
  float: <g fill="none" stroke="#666" strokeWidth="2"><rect x="1.500" y="1.500" width="21" height="21" rx="4" /><path d="M10 6h8v8h-8zM6 10h8v8H6z" /></g>,
  close: <g fill="none" stroke="#555" strokeWidth="2"><rect x="1.500" y="1.500" width="21" height="21" rx="4" /><path d="M7 7l10 10M17 7L7 17" strokeWidth="4" /></g>,
  tick: <path d="M4 10l5 9L20 2" fill="none" stroke="#000" strokeWidth="3.800" />,
  right: <path d="M3 1l17 11L3 23z" fill="#444" stroke="#000" />,
};
const Svg = styled.svg``;
const Icon = ({ n, s = 24, h }: { n: string; s?: number; h?: number }) => (
  <Svg width={s} height={h ?? s} viewBox="0 0 24 24" preserveAspectRatio={h ? 'none' : undefined}>{icons[n]}</Svg>
);
const T = ({ n, w = 33, s = 24 }: { n: string; w?: number; s?: number }) => <Cell $w={w}><Icon n={n} s={s} /></Cell>;

/* ---------- map ---------- */
const rng = (seed: number) => () => {
  seed = (seed * 1664525 + 1013904223) % 4294967296;
  return seed / 4294967296;
};
type Rect = [number, number, number, number];
const buildParcels = () => {
  const r = rng(77);
  const out: Rect[] = [];
  const split = (x: number, y: number, w: number, h: number, d: number) => {
    if (d <= 0 || (w < 8 && h < 8) || r() < 0.08) { out.push([x, y, w, h]); return; }
    const k = 0.3 + r() * 0.4;
    if (w > h) { split(x, y, w * k, h, d - 1); split(x + w * k, y, w * (1 - k), h, d - 1); }
    else { split(x, y, w, h * k, d - 1); split(x, y + h * k, w, h * (1 - k), d - 1); }
  };
  const columns: [number, number][] = [];
  for (let u = -560; u < 620;) {
    const w = 27 + r() * 14;
    columns.push([u, w]);
    u += w + 6;
  }
  for (let v = -12; v < 20; v++) {
    for (const [u, w] of columns) {
      const dense = r();
      split(u, v * 38, w, 32, dense < 0.3 ? 0 : dense < 0.42 ? 2 : dense < 0.75 ? 4 : 5);
    }
  }
  return out;
};
const parcels = buildParcels();
const west = 'M443 47L298 112 262 147 247 134 220 162 262 200 147 322 155 335 135 350 138 368 122 385 137 400 25 527 103 597 101 641 136 656 300 467 330 485 360 523 308 582 332 605 257 700 280 722 271 742 290 755 300 745 410 787 435 750 485 690 545 655 595 602 600 560 600 400 600 250 500 150 480 75 452 78z';
const east = 'M18 72L65 38Q100 28 140 32 160 34 180 45L250 93 452 252Q462 258 457 270L385 355 328 435Q312 450 311 462L303 575Q300 595 285 597L215 597 185 606 160 598 120 545 147 505 55 420 45 360 50 330 105 270 88 240 35 195z';

const MapDrawing = () => (
  <Svg width="332" height="557" viewBox="282 167 332 557">
    <defs>
      <clipPath id="west"><path d={west} /></clipPath>
      <clipPath id="east"><path d={east} /></clipPath>
    </defs>
    <g transform="translate(295 310) scale(.33333)">
      <path d={west} fill="none" stroke="#4a3a2c" strokeWidth="4" />
      <g clipPath="url(#west)">
        <path d={west} fill="#e2578a" />
        <g transform="translate(237 315) rotate(-47)" fill="#e4b434" stroke="#33301e" strokeWidth="2.200">
          {parcels.map(([x, y, w, h], i) => <rect key={i} x={x} y={y} width={w - 0.5} height={h - 0.5} />)}
        </g>
        <g stroke="#e2578a" fill="none">
          <path d="M228 155L395 298M137 400L235 302M180 350L285 440M320 632L448 740M440 388L395 440" strokeWidth="10" />
          <path d="M275 300L442 128" strokeWidth="12" />
          <path d="M248 280L308 214M378 518L406 490" strokeWidth="18" />
          <path d="M300 440L352 500M455 130L462 190M110 590L250 430M60 545L185 410M412 362L300 470M150 325L190 360M45 510L115 590" strokeWidth="7" />
          <path d="M435 660L555 550M410 780L490 690M380 765L470 650M150 325L260 205M375 440L470 540M400 205L465 262" strokeWidth="7" />
          <path d="M300 145L325 190" strokeWidth="14" />
        </g>
        <path d="M343 370l22 20-20 22-20-20z" fill="#e2578a" />
        <path d="M236 280l38 34-38 42-36-38z" fill="#e4b434" stroke="#33301e" strokeWidth="2" />
        <path d="M232 335l16-15 8 8-16 16z" fill="#8a6e20" stroke="#33301e" strokeWidth="2" />
        <path d="M405 585l40-48 60 48-40 52z" fill="#e4b434" stroke="#33301e" strokeWidth="2" />
        <path d="M420 570l28 20M435 560l8 20" stroke="#33301e" strokeWidth="4" />
        <path d="M330 545l20-22 30 25-42 50-25-16z" fill="#e4b434" stroke="#33301e" strokeWidth="2" />
        <path d="M345 660l45 35-35 65-55-16z" fill="#e4b434" stroke="#33301e" strokeWidth="2" />
        <path d="M335 700l45 20M350 668l-30 80" stroke="#33301e" strokeWidth="2" />
        <path d="M330 640l5 5-35 95-14 16-20-16z" fill="#e2578a" />
        <path d="M410 100l26-32 16 40-20 24z" fill="#e4b434" stroke="#33301e" strokeWidth="2" />
        <path d="M98 560l18-25q16 14 12 28l-14 26z" fill="#e4b434" stroke="#33301e" strokeWidth="2" />
      </g>
    </g>
    <g transform="translate(440 310) scale(.33333)">
      <g clipPath="url(#east)">
        <path d={east} fill="#e4b434" />
        <g fill="none" stroke="#3a341c" strokeWidth="2.800">
          <path d="M88 34L205 122Q215 130 225 122L250 95M70 38L130 85 108 118 70 90 40 98M130 85L20 195M70 38L72 55 18 85M72 62L40 98 60 115M72 55L110 85M85 72L100 110M40 98L20 130M50 118L95 130 70 180 40 150M60 130L35 165M95 130L40 190M130 95L60 175M60 175L90 205" />
          <path d="M143 92l45 35-7 9-45-35zM133 107l18 14-10 12-18-14zM153 120l14 10-12 15-14-10zM180 132l12 8-28 36-14-10 12-14-30-22M118 125l15 11-12 14-15-12zM120 150l25 18-12 14M100 150l18 14-12 16-18-14zM118 178l22 18-32 36-22-18zM112 186l18 14M100 198l18 14M125 182l-32 38M75 178l14 12-14 18-16-14zM70 230l14-18 15 12M72 240l18-20 12 12-18 22z" />
          <path d="M235 120L325 190M250 95L235 118M250 95L300 140 285 165M325 155L300 185M238 148l25 20-14 20-25-20zM218 178l20 16-16 20-20-16zM240 194l26 20-14 18-30-20M252 205l-10 16M262 168l28 22-14 20-26-18M270 192l22 18M330 162L382 205 378 215 350 248M328 162L258 262 300 290 318 290 380 220M290 235l15 10 12-18 18 14-15 20 12 10-16 22-15-8-12 6-20-16 12-14M312 212l22 18" />
          <path d="M382 210L318 298 385 352 455 265M366 232L440 290M355 250L425 308M340 270L405 325M330 285L398 340M395 220L340 308M418 235L355 320M435 252L372 340M345 262l15 12M330 300l40 32" />
          <path d="M378 225l14 10-8 12M400 240l16 12-10 14-16-12zM385 262l18 14-12 14-18-14zM425 258l16 12-8 12M355 290l18 14-10 12" />
          <path d="M130 285L175 235 168 230M175 235L210 262 190 290 215 305 190 330 175 318Q155 315 130 285zM150 260L190 290M200 258l-12 18M178 250l-12 15M222 270L320 350Q342 370 343 390 342 408 322 424L200 318 222 270M315 362L290 390M320 360L292 388 320 415 340 395M193 330L318 432" />
          <path d="M45 360L148 455 305 515M45 360L130 285M55 330L40 350M60 380L45 400M85 395l-10 16M20 375L100 440M75 390l22 20-12 14-20-18" />
          <path d="M160 480L298 537M152 476Q170 472 180 484L300 540 290 585Q280 595 240 590 200 590 188 602M145 505Q135 490 152 476M297 535L292 555 300 560 296 580" />
        </g>
      </g>
      <path d={east} fill="none" stroke="#3a341c" strokeWidth="3" />
      <path d="M38 440L50 428 142 508 108 542 20 465z" fill="#e4b434" stroke="#3a341c" strokeWidth="2.500" />
      <path d="M0 385L52 424 147 506 118 545 165 602M0 455L105 545M0 640L120 542M48 332L106 270" fill="none" stroke="#e2578a" strokeWidth="9" />
      <path d="M192 605L285 598" stroke="#c2577a" strokeWidth="4" />
    </g>
  </Svg>
);

/* ---------- content ---------- */
const menus: [string, string, string, number][] = [
  ['Pro', 'j', 'ect', 37], ['', 'E', 'dit', 20], ['', 'V', 'iew', 25], ['', 'L', 'ayer', 28], ['', 'S', 'ettings', 42],
  ['', 'P', 'lugins', 39], ['Vect', 'o', 'r', 34], ['', 'R', 'aster', 32], ['', 'D', 'atabase', 48], ['', 'W', 'eb', 24],
  ['', 'M', 'esh', 29], ['Pro', 'c', 'essing', 57], ['', 'H', 'elp', 25],
];
type Node = { l: number; i: string; t: string; a?: 'down' | 'right'; alt?: boolean };
const tree: Node[] = [
  { l: 0, i: 'star', t: 'Favorites', a: 'down' },
  { l: 1, i: 'folderO', t: 'C:\\Users\\ujaval\\Downloads', a: 'down' },
  { l: 2, i: 'folderO', t: 'GISSLP2020', a: 'down' },
  { l: 3, i: 'folder', t: 'landuse_buffer', a: 'right' },
  { l: 3, i: 'folder', t: 'landuse_change', a: 'right' },
  { l: 3, i: 'folderO', t: 'landuse_mapping', a: 'down' },
  { l: 4, i: 'poly', t: 'cbd.shp', alt: true },
  { l: 4, i: 'polyG', t: 'split_zoning_cbd.shp' },
  { l: 4, i: 'poly', t: 'zoning_cbd.shp', alt: true },
  { l: 4, i: 'q', t: 'zoning_map', a: 'right' },
  { l: 1, i: 'folder', t: 'C:\\Users\\ujaval\\Downloads\\advanc', a: 'right' },
  { l: 1, i: 'folder', t: 'C:\\Users\\ujaval\\Google Drive\\Proje', a: 'right' },
];
const row1a = ['new', 'open', 'save', 'layout', 'layouts', 'style'];
const row1b = ['pan', 'zin', 'zout', 'zfull', 'zsel', 'zlay', 'z11', 'zprev', 'znext', 'bmark', 'mesh3d', 'bnew', 'bshow', 'clock', 'refresh'];

const DockButtons = () => <><Icon n="float" s={11} /><Icon n="close" s={11} /></>;
const CheckBox = () => <Check><Icon n="tick" s={11} /></Check>;

export default function App() {
  return (
    <Window>
      <Global />
      <TitleBar>
        <TitleIcon><Icon n="q" s={17} /></TitleIcon>
        <TitleText>*zoning_map — QGIS</TitleText>
        <WinButtons>
          <WinButton $w={29}><Svg width="14" height="8"><rect x="1.500" y="3.500" width="11" height="4" fill="#fff" stroke="#555e70" /></Svg></WinButton>
          <WinButton $w={27}><Svg width="13" height="11"><path d="M1 1h11v9H1zM4.500 4.500v2h4v-2z" fill="#fff" fillRule="evenodd" stroke="#555e70" /></Svg></WinButton>
          <WinButton $w={46} $close><Svg width="13" height="11"><path d="M1 1h3.500l2 2.500L8.500 1H12L8.500 5.500 12 10H8.500l-2-2.500-2 2.500H1l3.500-4.500z" fill="#fff" stroke="#5a4a58" /></Svg></WinButton>
        </WinButtons>
      </TitleBar>
      <Body>
        <MenuBar>
          {menus.map(([a, u, b, w]) => <MenuItem key={a + u + b} $w={w}>{a}<u>{u}</u>{b}</MenuItem>)}
        </MenuBar>
        <ToolBar $h={39}>
          <Grip $w={12} />
          {row1a.map(n => <T key={n} n={n} />)}
          <Grip $w={16} />
          <Cell $w={33}><Pressed $w={32} $h={31}><Icon n="hand" /></Pressed></Cell>
          {row1b.map(n => <T key={n} n={n} />)}
          <Grip $w={16} />
          {['info', 'table', 'abacus'].map(n => <T key={n} n={n} />)}
          <More $w={37}>»</More>
          <Grip $w={2} /><Cell $w={4} />
          <T n="globe" w={30} /><More $w={16}>»</More>
        </ToolBar>
        <ToolBar $h={39}>
          <Grip $w={12} />
          {['dsm', 'gpkg', 'shp', 'feather', 'chip'].map(n => <T key={n} n={n} />)}
          <Sep $w={9} /><T n="virt" w={30} /><Sep $w={10} />
          <Grip $w={18} />
          <T n="tagY" w={25} /><Cell $w={5} /><T n="chart" w={32} /><Sep $w={7} />
          <T n="tagPin" w={33} /><T n="tagRed" w={32} /><Sep $w={10} />
          <T n="tg1" w={31} />{['tg2', 'tg3', 'tg4', 'tg5'].map(n => <T key={n} n={n} />)}
          <Cell $w={13} /><Grip $w={20} /><T n="help" w={24} /><Grip $w={30} />
        </ToolBar>
        <ToolBar $h={38}>
          <Grip $w={12} />
          <T n="sel" w={33} /><Cell $w={12}><Caret /></Cell>
          <T n="eps" w={33} /><Cell $w={12}><Caret /></Cell>
          <T n="desel" w={34} /><Cell $w={10}><Caret /></Cell>
          <T n="selLoc" w={35} /><Grip $w={20} />
          <T n="qms" w={24} /><Cell $w={9} /><T n="osm" w={24} />
          <Grip $w={29} /><T n="prof" w={16} />
        </ToolBar>
        <Main>
          <LeftDock>
            <DockTitle $h={22} $pl={4} $pr={2}><span>Browser</span><DockButtons /></DockTitle>
            <DockTools>
              {['addl', 'refresh', 'filter', 'collapse', 'infoB'].map(n => <T key={n} n={n} w={25} s={16} />)}
            </DockTools>
            <TreeBox $h={234}>
              <TreeTop>
                <TreeRows>
                  {tree.map(r => (
                    <TreeRow key={r.t} $lvl={r.l} $alt={r.alt}>
                      <Cell $w={20}>{r.a && <Caret $dir={r.a} />}</Cell>
                      <Cell $w={22}><Icon n={r.i} s={16} /></Cell>
                      <Label>{r.t}</Label>
                    </TreeRow>
                  ))}
                </TreeRows>
                <VBar><BarEnd><Caret $dir="up" /></BarEnd><Thumb $n={38} /><Fill /><BarEnd><Caret /></BarEnd></VBar>
              </TreeTop>
              <HBar>
                <BarEnd $v><Caret $dir="left" /></BarEnd><Thumb $v $n={104} /><Fill />
                <BarEnd $v><Caret $dir="right" /></BarEnd><HBarCorner />
              </HBar>
            </TreeBox>
            <Splitter />
            <DockTitle $h={21} $pl={4} $pr={2}><span>Layers</span><DockButtons /></DockTitle>
            <DockTools>
              <Pressed $w={25} $h={23}><Icon n="brush" s={18} /></Pressed>
              <T n="group" w={25} s={16} /><T n="eye" w={26} s={17} /><T n="filter" w={25} s={16} />
              <T n="epsF" w={26} s={16} /><Cell $w={10}><Caret /></Cell>
              <T n="expand" w={28} s={16} /><T n="collapse" w={22} s={16} /><T n="remove" w={25} s={16} />
            </DockTools>
            <TreeBox $h={218}>
              <TreeRows>
                <TreeRow $lvl={0} $alt><Cell $w={59}><Cell $w={23} /><CheckBox /><Cell $w={6} /><Swatch $c="#aeab76" /></Cell><Label $b $u $pl={6} $ls={-0.4}>zoning_cbd</Label></TreeRow>
                <TreeRow $lvl={0}><Cell $w={59}><Cell $w={23} /><CheckBox /><Cell $w={6} /><Swatch $c="#e2578a" /></Cell><Label $b $pl={6} $ls={-0.4}>cbd</Label></TreeRow>
              </TreeRows>
            </TreeBox>
          </LeftDock>
          <VSplit $w={6} />
          <Canvas><MapDrawing /></Canvas>
          <VSplit $w={9} />
          <RightDock>
            <TitleWrap><DockTitle $h={22} $pl={1} $pr={2}><span>Layer Styling</span><DockButtons /></DockTitle></TitleWrap>
            <Combo $w={340} $h={24}><Icon n="polyL" s={16} /><Label $pl={2}>zoning_cbd</Label><Caret /></Combo>
            <RendererRow>
              <Cell $w={41}><Cell $w={35}><Icon n="brushDim" s={22} /></Cell></Cell>
              <Combo $w={299} $h={24}><Icon n="single" s={14} /><Label $pl={4} $ls={-0.3}>Single Symbol</Label><Caret /></Combo>
            </RendererRow>
            <StyleBody>
              <SideTabs>
                {['tagTab', 'abcW', 'cube', 'diag', 'hist'].map(n => <SideTab key={n}><Icon n={n} s={n === 'tagTab' || n === 'abcW' ? 24 : 21} /></SideTab>)}
              </SideTabs>
              <StyleContent>
                <SymbolRow>
                  <Preview><PreviewFill /></Preview>
                  <SymbolTree>
                    <TreeRow $lvl={0} $alt><Cell $w={20}><Caret /></Cell><Cell $w={22}><Swatch $c="#aeab76" /></Cell><Label $b $ls={-0.5}>Fill</Label></TreeRow>
                    <TreeRow $lvl={1}><Cell $w={20} /><Cell $w={22}><Swatch $c="#e4b434" /></Cell><Label>Simple Fill</Label></TreeRow>
                  </SymbolTree>
                  <SymbolButtons>
                    <PushButton $w={28} $h={24}><Icon n="plus" s={16} /></PushButton>
                    <PushButton $w={28} $h={24} $dim><Icon n="triU" s={16} /></PushButton>
                    <PushButton $w={28} $h={24} $dim><Icon n="minus" s={16} /></PushButton>
                    <PushButton $w={28} $h={24} $dim><Icon n="triD" s={16} /></PushButton>
                    <PushButton $w={28} $h={24} $dim><Icon n="dup" s={16} /></PushButton>
                    <PushButton $w={28} $h={24} $dim><Icon n="lockD" s={16} /></PushButton>
                  </SymbolButtons>
                </SymbolRow>
                <Rule $mt={6} $w={299} />
                <ScrollArea>
                  <Form>
                    <FormRow $h={22}><label>Unit</label><Combo $w={239} $h={22}><Label $pl={0} $ls={-0.45}>Millimeters</Label><Caret /></Combo></FormRow>
                    <FormRow $h={22}><label>Opacity</label><Slider /><Spin $w={100} $h={20}><span>100.0 %</span><SpinArrows><Caret $dir="up" $c="#aaa" /><Caret /></SpinArrows></Spin></FormRow>
                    <FormRow $h={22}><label>Color</label><ColorButton /><Cell $w={1} /><PushButton $w={11} $h={22}><Caret /></PushButton></FormRow>
                    <Rule $mt={67} $w={276} />
                    <SearchRow>
                      <Field $w={246} $ml={0} $pl={10}>
                        <Icon n="search" s={13} /><Label $pl={5} $ls={0}>Favorites</Label><Icon n="clear" s={13} h={10} /><Cell $w={8} />
                        <SpinArrows $w={20}><Caret /></SpinArrows>
                      </Field>
                      <Cell $w={34}><Icon n="style" s={15} /></Cell>
                    </SearchRow>
                    <StyleList>
                      <StyleItems><Gradient /><Gray /></StyleItems>
                      <VBar><BarEnd><Caret $dir="up" /></BarEnd><Thumb $n={27} /><Fill /><BarEnd><Caret /></BarEnd></VBar>
                    </StyleList>
                    <Rule $mt={6} $w={23} />
                  </Form>
                  <VBar><BarEnd><Caret $dir="up" /></BarEnd><Thumb $n={212} /><Fill /><BarEnd><Caret /></BarEnd></VBar>
                </ScrollArea>
                <RenderingHead><Icon n="right" s={9} h={12} />Layer Rendering</RenderingHead>
                <ActionRow>
                  <PushButton $w={24} $h={23}><Icon n="undo" s={13} /></PushButton><Cell $w={6} />
                  <PushButton $w={24} $h={23}><Icon n="redo" s={13} /></PushButton><Cell $w={78} />
                  <CheckBox /><StatusText $ls={-0.15}>Live update</StatusText><Fill />
                  <PushButton $w={80} $h={21} $text>Apply</PushButton>
                </ActionRow>
              </StyleContent>
            </StyleBody>
          </RightDock>
        </Main>
        <Status>
          <Field $w={200} $ml={0} $pl={8} $c="#808080"><Icon n="search" s={13} /><Label $pl={7} $ls={-0.1}>Type to locate (Ctrl+K)</Label></Field>
          <Clip $w={23} $ml={37} $shift={2}><span>ordina</span></Clip>
          <Field $w={107} $ml={3} $pl={5}><span>2052220,-4017612</span></Field>
          <Push $ml={4}><Icon n="mouse" s={15} /></Push>
          <Clip $w={6} $ml={13}><span>a</span></Clip>
          <Field $w={81} $ml={2} $pl={4}><span>1:32729</span><SpinArrows $w={20}><Caret /></SpinArrows></Field>
          <Push $ml={11}><Icon n="lock" s={15} /></Push>
          <Clip $w={14} $ml={7} $shift={2}><span>gnif</span></Clip>
          <Push $ml={2}><Spin $w={89} $h={20}><span>100%</span><SpinArrows><Caret $dir="up" /><Caret /></SpinArrows></Spin></Push>
          <Clip $w={12} $ml={8}><span>at</span></Clip>
          <Push $ml={7}><Spin $w={84} $h={20}><span>0.0 °</span><SpinArrows><Caret $dir="up" /><Caret /></SpinArrows></Spin></Push>
          <Push $ml={6}><CheckBox /></Push><StatusText $ls={0}>Render</StatusText>
          <Push $ml={17}><Icon n="wire" s={16} /></Push><StatusText $ls={-0.1}>EPSG:3857</StatusText>
          <Push $ml={18}><Icon n="bubble" s={17} /></Push>
        </Status>
      </Body>
      <Ring $x={6} $y={462} $w={49} $h={51} $b={3} $c="#fb2c0c" />
      <Ring $x={928} $y={211} $w={39} $h={48} $b={2} $c="#ee0a14" />
      <Pointer><Svg width="14" height="21" viewBox="-1 -1 14 21"><path d="M0 0v16l4-3.500 3 6 3-1.500-3-5.500 5-.5z" fill="#fff" stroke="#223" strokeWidth="1" /></Svg></Pointer>
    </Window>
  );
}
